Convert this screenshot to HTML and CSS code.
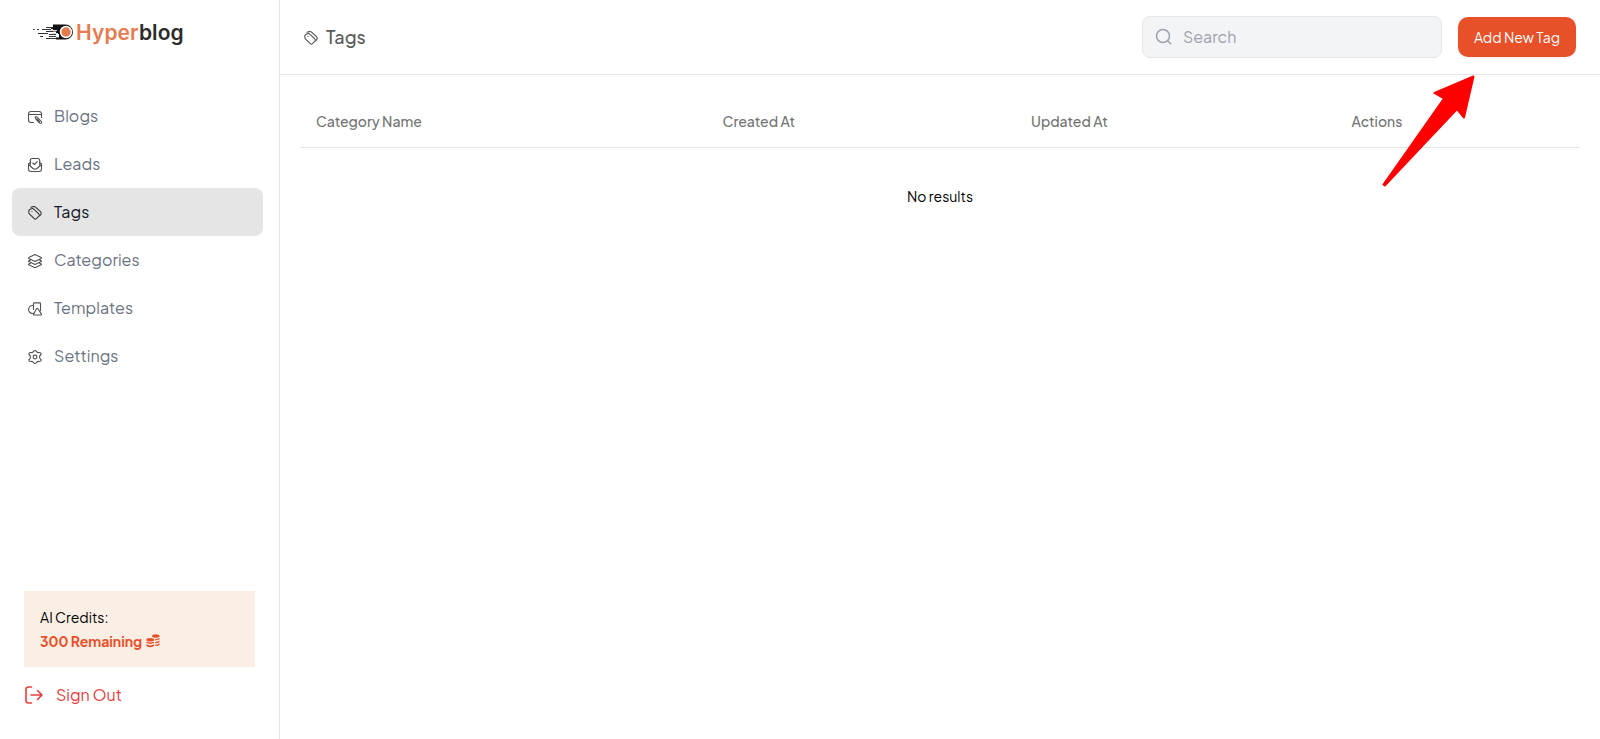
FILE: index.html
```html
<!DOCTYPE html>
<html lang="en">
<head>
    <meta charset="UTF-8">
    <meta name="viewport" content="width=device-width, initial-scale=1.0">
    <title>Tags - Hyperblog</title>
    <link rel="stylesheet" href="styles.css">
</head>
<body>
    <div class="app">
        <aside class="sidebar">
            <a class="logo" href="#">
                <svg class="logo-mark" width="42" height="18" viewBox="0 0 42 18">
                    <path fill="#111" d="M21 1.500H33.500A7.500 7.500 0 0 1 33.500 16.500H24V14.500H27V11H24V8.500H21V6H19V4H21Z"/>
                    <path stroke="#333" stroke-width="1" d="M1 6.500h1.500M5 6.500h2M6 10.500h10M8 13.500h3M14 15.500h10M10 6.500h9M14 4.500h7M14 8.500h7M17 11.500h7M17 13.500h7"/>
                    <path stroke="#ddd" stroke-width="1" d="M18 7.500h7M20 10.500h6"/>
                    <circle cx="34" cy="9" r="6.200" fill="#fff"/>
                    <circle cx="34" cy="9" r="4.700" fill="#e87b4f"/>
                </svg>
                <span class="logo-text"><span class="logo-accent">Hyper</span>blog</span>
            </a>

            <nav class="nav">
                <a class="nav-item" href="#">
                    <svg class="icon" viewBox="0 0 16 16">
                        <path d="M6.500 13.500H4A2.500 2.500 0 0 1 1.500 11V4.500A2.500 2.500 0 0 1 4 2.500H12A2.500 2.500 0 0 1 14.500 4.500V8.500M1.500 5.500H14.500"/>
                        <path d="M8.200 7.800L10.500 8.300L14.300 12.500A1.100 1.100 0 0 1 12.700 14.100L8.900 10.100ZM10 9.800L12.600 12.600"/>
                    </svg>
                    <span>Blogs</span>
                </a>
                <a class="nav-item" href="#">
                    <svg class="icon" viewBox="0 0 16 16">
                        <path d="M3.300 8V3.500A2 2 0 0 1 5.300 1.500H10.700A2 2 0 0 1 12.700 3.500V8"/>
                        <path d="M3.300 5.500L1.500 7V12A2.500 2.500 0 0 0 4 14.500H12A2.500 2.500 0 0 0 14.500 12V7L12.700 5.500M1.500 7.500L6 11.500Q8 12.800 10 11.500L14.500 7.500M5.800 6L7.400 7.500L10.300 4.700"/>
                    </svg>
                    <span>Leads</span>
                </a>
                <a class="nav-item active" href="#">
                    <svg class="icon" viewBox="0 0 16 16">
                        <path d="M1.800 6.200Q1.800 5 2.800 4.500L4.500 3.700Q5.800 3.200 6.800 4.100L11.800 8.800Q12.800 9.900 11.900 11L9.500 13.700Q8.400 14.800 7.300 13.700L2.600 9.200Q1.800 8.300 1.800 7.200Z"/>
                        <path d="M3.800 2.200L6.400 1.600Q7.800 1.400 8.800 2.300L13.500 6.600Q14.800 8 13.900 9.400L12.700 11M4.900 6.500h.1"/>
                    </svg>
                    <span>Tags</span>
                </a>
                <a class="nav-item" href="#">
                    <svg class="icon" viewBox="0 0 16 16">
                        <path d="M8 1.500L14.200 4.600Q14.700 5 14.200 5.400L8 8.500L1.800 5.400Q1.300 5 1.800 4.600ZM3.300 7L1.800 7.800Q1.300 8.200 1.800 8.600L8 11.500L14.200 8.600Q14.700 8.200 14.200 7.800L12.700 7M3.300 10.200L1.800 11Q1.300 11.400 1.800 11.800L8 14.700L14.200 11.800Q14.700 11.400 14.200 11L12.700 10.200"/>
                    </svg>
                    <span>Categories</span>
                </a>
                <a class="nav-item" href="#">
                    <svg class="icon" viewBox="0 0 16 16">
                        <path d="M6.500 4.600A4 4 0 1 0 6.800 12.300M6.500 8.500V2.700Q6.500 1.900 7.300 1.900H12.700Q13.500 1.900 13.500 2.700V9.500"/>
                        <path d="M9.500 7.700Q10.200 6.700 10.900 7.700L14.300 12.900Q14.700 14 13.700 14H7.300Q6.100 14 6.600 12.900Z"/>
                    </svg>
                    <span>Templates</span>
                </a>
                <a class="nav-item" href="#">
                    <svg class="icon" viewBox="0 0 16 16">
                        <path d="M6.800 2.100Q8 .9 9.200 2.100Q10.300 3.900 12 3.500Q13.900 3.200 14.200 5Q12.500 6.700 12.500 8Q12.500 9.300 14.200 11Q13.900 12.800 12 12.500Q10.300 12.100 9.200 13.900Q8 15.100 6.800 13.900Q5.700 12.100 4 12.500Q2.100 12.800 1.800 11Q3.500 9.300 3.500 8Q3.500 6.700 1.800 5Q2.100 3.200 4 3.500Q5.700 3.900 6.800 2.100Z"/>
                        <circle cx="8" cy="8" r="1.900"/>
                    </svg>
                    <span>Settings</span>
                </a>
            </nav>

            <div class="credits">
                <p>AI Credits:</p>
                <p class="credits-left">
                    <span>300 Remaining</span>
                    <svg width="14" height="14" viewBox="0 0 14 14" fill="currentColor">
                        <ellipse cx="9.800" cy="2" rx="3.800" ry="1.800"/>
                        <ellipse cx="4.200" cy="5.700" rx="3.900" ry="1.800"/>
                        <path d="M9 5.200Q12 5 13.600 3.700V5.100Q12.300 6.400 9.300 6.400ZM9.300 8Q12.300 7.700 13.600 6.500V7.900Q12.300 9.100 9.300 9.300ZM9.300 10.700Q12.300 10.500 13.600 9.300V10.700Q12.300 11.900 9.300 12.100ZM.3 7.500Q4.200 9.700 8.100 7.500V8.800Q4.200 11 .3 8.800ZM.3 10.300Q4.200 12.500 8.100 10.300V11.800Q4.200 14.800 .3 11.800Z"/>
                    </svg>
                </p>
            </div>

            <a class="sign-out" href="#">
                <svg width="20" height="20" viewBox="0 0 20 20">
                    <path d="M7.500 2H4.500Q2 2 2 4.500V15.500Q2 18 4.500 18H7.500M7 10H18M13.500 5.500L18 10L13.500 14.500"/>
                </svg>
                <span>Sign Out</span>
            </a>
        </aside>

        <main class="main">
            <header class="header">
                <h1 class="title">
                    <svg class="icon" viewBox="0 0 16 16">
                        <path d="M1.800 6.200Q1.800 5 2.800 4.500L4.500 3.700Q5.800 3.200 6.800 4.100L11.800 8.800Q12.800 9.900 11.900 11L9.500 13.700Q8.400 14.800 7.300 13.700L2.600 9.200Q1.800 8.300 1.800 7.200Z"/>
                        <path d="M3.800 2.200L6.400 1.600Q7.800 1.400 8.800 2.300L13.500 6.600Q14.800 8 13.900 9.400L12.700 11M4.900 6.500h.1"/>
                    </svg>
                    <span>Tags</span>
                </h1>
                <div class="actions">
                    <label class="search">
                        <svg width="18" height="18" viewBox="0 0 18 18">
                            <circle cx="8" cy="8" r="6.500"/>
                            <path d="M12.700 12.700L15.700 15.700"/>
                        </svg>
                        <input type="text" placeholder="Search">
                    </label>
                    <button class="add-button">Add New Tag</button>
                </div>
            </header>

            <section class="content">
                <table class="table">
                    <thead>
                        <tr>
                            <th class="col-name">Category Name</th>
                            <th class="col-created">Created At</th>
                            <th class="col-updated">Updated At</th>
                            <th>Actions</th>
                        </tr>
                    </thead>
                    <tbody>
                        <tr>
                            <td colspan="4">No results</td>
                        </tr>
                    </tbody>
                </table>
            </section>
        </main>

        <!-- Arrow pointing at the add button -->
        <svg class="pointer" width="96" height="116" viewBox="0 0 96 116">
            <path d="M93.500 2.500L54.500 19L64 24.500L3.500 110.500L4.800 111.500L77 35L84 43.500Z"/>
        </svg>
    </div>
</body>
</html>
```
FILE: styles.css
```css
* {
    box-sizing: border-box;
    margin: 0;
    padding: 0;
}

body {
    font-family: "Plus Jakarta Sans", Inter, sans-serif;
    background: #fff;
    color: #000;
}

a {
    color: inherit;
    text-decoration: none;
}

.app {
    position: relative;
    display: flex;
    height: 100vh;
    overflow: hidden;
}

.sidebar {
    display: flex;
    flex-direction: column;
    width: 280px;
    border-right: 1px solid #e5e5e5;
}

.logo {
    display: flex;
    align-items: center;
    gap: 2px;
    height: 64px;
    padding-left: 32px;
}

.logo-mark {
    fill: none;
}

.logo-text {
    font-family: Inter, sans-serif;
    font-size: 21px;
    font-weight: 600;
    letter-spacing: 0.1px;
    color: #2b2b2b;
}

.logo-accent {
    color: #e87b4f;
}

.nav {
    flex: 1;
    padding: 28px 16px 0 12px;
}

.nav-item {
    display: flex;
    align-items: center;
    gap: 11px;
    height: 48px;
    padding-left: 15px;
    border-radius: 8px;
    color: #6b7280;
    font-size: 16px;
    letter-spacing: 0.05px;
}

.nav-item span,
.sign-out span {
    padding-bottom: 2px;
}

.nav-item .icon {
    margin-top: 1px;
}

.nav-item.active {
    background: #e5e5e5;
    color: #111827;
}

.icon {
    width: 16px;
    height: 16px;
    fill: none;
    stroke: #505050;
    stroke-width: 1.1;
    stroke-linecap: round;
    stroke-linejoin: round;
}

.active .icon {
    stroke: #333;
}

.credits {
    height: 76px;
    margin: 0 24px;
    padding: 14px 16px;
    background: #fbeee5;
    font-size: 14px;
    line-height: 24px;
}

.credits-left {
    display: flex;
    align-items: center;
    gap: 4px;
    color: #e8502a;
    font-weight: 700;
}

.sign-out {
    display: flex;
    align-items: center;
    gap: 12px;
    height: 56px;
    margin-bottom: 16px;
    padding-left: 24px;
    color: #e53e3e;
    font-size: 16px;
}

.sign-out svg {
    fill: none;
    stroke: currentColor;
    stroke-width: 1.6;
    stroke-linecap: round;
    stroke-linejoin: round;
}

.main {
    flex: 1;
}

.header {
    display: flex;
    align-items: center;
    justify-content: space-between;
    height: 75px;
    padding: 0 24px 0 23px;
    border-bottom: 1px solid #e5e5e5;
}

.title {
    display: flex;
    align-items: center;
    gap: 7px;
    color: #5a5a5a;
    font-size: 18px;
    font-weight: 500;
}

.title span {
    padding-bottom: 2px;
}

.title .icon {
    margin-top: 1px;
}

.actions {
    display: flex;
    align-items: center;
    gap: 16px;
}

.search {
    display: flex;
    align-items: center;
    gap: 10px;
    width: 300px;
    height: 42px;
    padding-left: 12px;
    border: 1px solid #e5e7eb;
    border-radius: 8px;
    background: #f3f4f6;
}

.search svg {
    fill: none;
    stroke: #9ca3af;
    stroke-width: 1.5;
    stroke-linecap: round;
}

.search input {
    width: 220px;
    padding-bottom: 2px;
    border: none;
    outline: none;
    background: transparent;
    font: inherit;
}

.search input::placeholder {
    color: #9ca3af;
}

.add-button {
    width: 118px;
    height: 40px;
    border: none;
    border-radius: 10px;
    background: #e8502a;
    box-shadow: 0 1px 2px rgba(0, 0, 0, 0.08);
    color: #fff;
    font: inherit;
    font-size: 14px;
}

.content {
    padding: 24px 20px;
}

.table {
    width: 100%;
    border-collapse: collapse;
    table-layout: fixed;
    font-size: 14px;
}

.table th {
    height: 48px;
    padding: 0 16px 4px;
    border-bottom: 1px solid #e5e5e5;
    color: #737373;
    font-weight: 500;
    text-align: left;
}

.table td {
    height: 98px;
    text-align: center;
}

.col-name {
    width: 406.5px;
}

.col-created {
    width: 308.5px;
}

.col-updated {
    width: 320.5px;
}

.pointer {
    position: absolute;
    top: 74px;
    left: 1380px;
    fill: #f00;
    stroke: #f00;
    stroke-width: 2;
    stroke-linejoin: round;
}
```
